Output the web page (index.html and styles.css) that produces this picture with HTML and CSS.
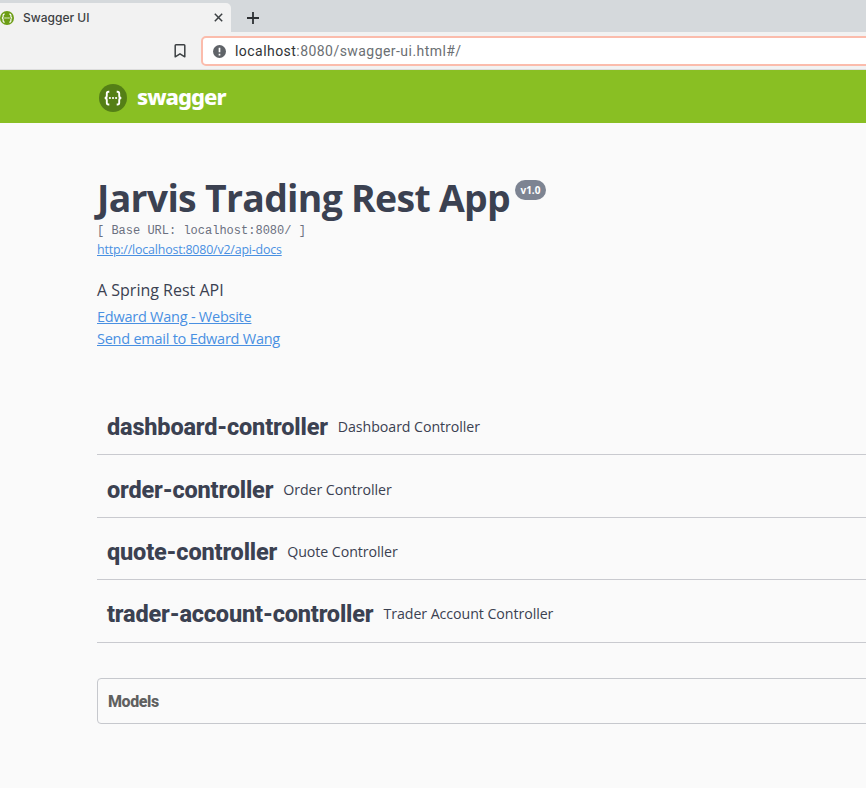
FILE: index.html
```html
<!DOCTYPE html>
<html lang="en">
<head>
<meta charset="utf-8">
<title>Swagger UI</title>
<link rel="stylesheet" href="styles.css">
</head>
<body>
<svg class="defs" width="0" height="0">
  <symbol id="braces" viewBox="0 0 28 28">
    <g fill="none" stroke="#fff" stroke-width="1.9">
      <path d="M10.3 7.8H9.5q-1.7 0-1.7 1.8v2.1q0 2.3-2.1 2.3q2.1 0 2.1 2.3v2.4q0 1.8 1.7 1.8h.8"/>
      <path d="M17.7 7.8h.8q1.7 0 1.7 1.8v2.1q0 2.3 2.1 2.3q-2.1 0-2.1 2.3v2.4q0 1.8-1.7 1.8h-.8"/>
    </g>
    <g fill="#fff"><circle cx="10.9" cy="14" r="1.1"/><circle cx="14" cy="14" r="1.1"/><circle cx="17.1" cy="14" r="1.1"/></g>
  </symbol>
</svg>
<div class="tabs">
  <div class="tab">
    <svg class="favicon" width="14" height="14" viewBox="0 0 28 28"><circle cx="14" cy="14" r="14" fill="#6d9d16"/><use href="#braces" x="-3.5" y="-3.5" width="35" height="35"/></svg>
    <span class="tab-title">Swagger UI</span>
    <svg class="close" width="9" height="9" viewBox="0 0 9 9"><path d="M.8.8l7.4 7.4M8.2.8L.8 8.2" stroke="#3c4043" stroke-width="1.5"/></svg>
  </div>
  <svg class="plus" width="12" height="12" viewBox="0 0 12 12"><path d="M6 0v12M0 6h12" stroke="#2d3033" stroke-width="1.8"/></svg>
</div>
<div class="toolbar">
  <svg class="bookmark" width="12" height="14" viewBox="0 0 12 14"><path d="M1.2 1.6q0-.8.8-.8h8q.8 0 .8.8v11.2L6 9.8l-4.8 3z" fill="none" stroke="#3c4043" stroke-width="1.5" stroke-linejoin="round"/></svg>
  <div class="address">
    <svg width="13" height="13" viewBox="0 0 13 13"><circle cx="6.5" cy="6.5" r="6.5" fill="#5f6368"/><path d="M6.5 2.7v4.6M6.5 8.7v1.7" stroke="#fff" stroke-width="1.7"/></svg>
    <span class="url"><span class="host">localhost</span>:8080/swagger-ui.html#/</span>
  </div>
</div>
<header class="topbar">
  <svg width="28" height="28" viewBox="0 0 28 28"><circle cx="14" cy="14" r="14" fill="#547f16"/><use href="#braces"/></svg>
  <span class="brand">swagger</span>
</header>
<main>
  <section class="info">
    <h1><span class="name">Jarvis Trading Rest App</span><span class="version">v1.0</span></h1>
    <pre>[ Base URL: localhost:8080/ ]</pre>
    <a class="docs" href="#">http://localhost:8080/v2/api-docs</a>
    <p>A Spring Rest API</p>
    <a class="contact" href="#">Edward Wang - Website</a>
    <a class="contact" href="#">Send email to Edward Wang</a>
  </section>
  <section class="controllers">
    <div class="row"><h2>dashboard-controller</h2><span>Dashboard Controller</span></div>
    <div class="row"><h2>order-controller</h2><span>Order Controller</span></div>
    <div class="row"><h2>quote-controller</h2><span>Quote Controller</span></div>
    <div class="row"><h2>trader-account-controller</h2><span>Trader Account Controller</span></div>
  </section>
  <section class="models"><h4>Models</h4></section>
</main>
</body>
</html>
```
FILE: styles.css
```css
* { box-sizing: border-box; }
body { margin: 0; height: 788px; overflow: hidden; background: #fafafa; color: #3b4151; font-family: "Open Sans", sans-serif; }
h1, h2, h4, p, pre { margin: 0; }
svg { flex: none; display: block; }
.defs { position: absolute; }
.tabs { height: 32px; background: #d5d9dc; display: flex; align-items: flex-start; }
.tab { width: 231px; height: 29px; margin-top: 3px; padding-right: 8px; display: flex; align-items: center; background: #f2f2f2; border-radius: 0 5px 0 0; box-shadow: 0 3px #f2f2f2; }
.tab-title { margin-left: 9px; flex: 1; font: 500 12px/16px Inter, sans-serif; color: #3c4043; }
.plus { margin: 12px 0 0 16px; }
.toolbar { height: 38px; background: #f2f2f2; border-bottom: 1px solid #ddd; display: flex; align-items: flex-start; }
.bookmark { margin: 12px 15px 0 174px; }
.address { flex: 1; height: 30px; margin-top: 4px; margin-right: -10px; padding-left: 10px; display: flex; align-items: center; background: #fff; border: 2px solid #fbbcac; border-radius: 5px; }
.url { margin-left: 9px; font: 14px/20px Roboto, sans-serif; color: #6b6f73; letter-spacing: .45px; white-space: nowrap; }
.host { color: #303336; }
.topbar { height: 53px; background: #89bf23; display: flex; align-items: center; padding: 2px 0 0 99px; }
.brand { margin: -3px 0 0 10px; color: #fff; font: 800 22px/28px "Noto Sans", sans-serif; letter-spacing: -1px; }
main { padding-left: 97px; }
.info { padding-top: 49px; display: flex; flex-direction: column; align-items: flex-start; }
h1 { display: flex; align-items: flex-start; font: 700 37.4px/52px "Open Sans", sans-serif; white-space: nowrap; }
.name { letter-spacing: -.7px; }
.version { margin: 8px 0 0 5px; width: 31px; height: 20px; border-radius: 10px; background: #7d8492; color: #fff; font: 700 10px/20px "Open Sans", sans-serif; text-align: center; }
pre { font: 12px/14px "Liberation Mono", monospace; color: #6b7080; }
a { color: #4990e2; }
.docs { margin-top: 3px; font-size: 12.4px; line-height: 17px; letter-spacing: -.18px; }
p { margin-top: 21px; font-size: 16px; line-height: 22px; }
.contact { font-size: 14.5px; line-height: 21.5px; letter-spacing: -.24px; }
p + .contact { margin-top: 5px; }
.controllers { padding-top: 44px; }
.row { height: 62.4px; padding: 6px 0 0 10px; display: flex; align-items: center; border-bottom: 1px solid #c9cacf; }
h2 { padding-top: 1px; font: 800 23.5px/32px Roboto, sans-serif; letter-spacing: -.17px; white-space: nowrap; }
.row span { padding-left: 10px; font-size: 14.2px; letter-spacing: -.06px; white-space: nowrap; }
.models { height: 46px; margin-top: 35px; margin-right: -10px; padding-left: 10px; display: flex; align-items: center; border: 1px solid #c6c8cd; border-radius: 4px; }
h4 { padding-top: 2px; font: 800 16px/22px Roboto, sans-serif; letter-spacing: -.4px; color: #606060; }
```
